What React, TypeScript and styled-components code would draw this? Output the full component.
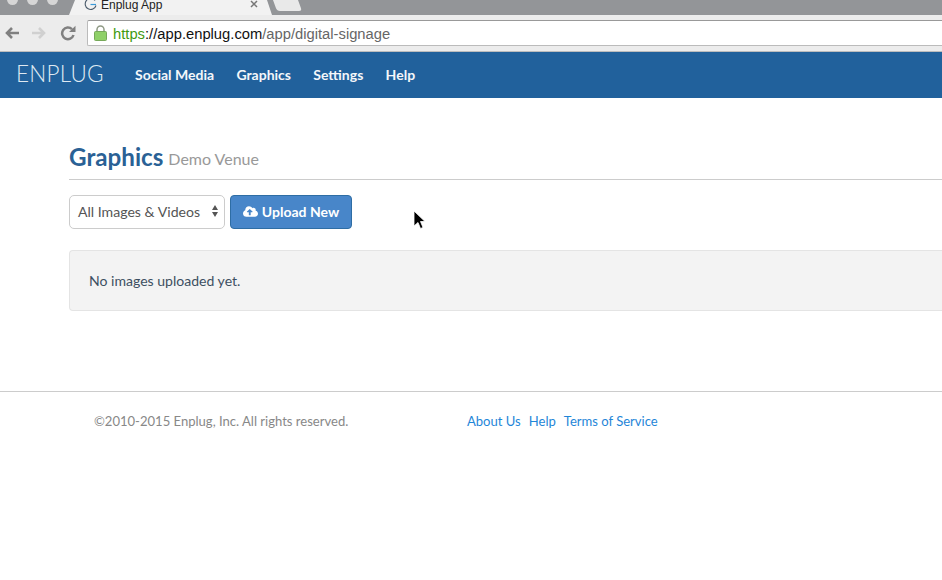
import React from 'react'
import styled, { createGlobalStyle } from 'styled-components'
import { FaCloudUploadAlt } from 'react-icons/fa'

const GlobalStyle = createGlobalStyle`
	html, body {
		margin: 0;
		padding: 0;
		background: #fff;
		overflow: hidden;
	}
	body {
		font-family: Lato, 'Liberation Sans', sans-serif;
	}
`

const Page = styled.div`
	width: 942px;
	height: 580px;
	overflow: hidden;
`

const TabStrip = styled.div`
	height: 15px;
	background: #939598;
	display: flex;
	overflow: hidden;
`

const WindowDots = styled.div`
	display: flex;
	gap: 9px;
	width: 69px;
	padding-left: 7px;
	box-sizing: border-box;
	margin-top: -6px;
`

const WindowDot = styled.span`
	width: 11px;
	height: 11px;
	border-radius: 50%;
	background: #d6d6d6;
`

const ActiveTab = styled.div`
	width: 203px;
	height: 15px;
	background: #f2f2f2;
	clip-path: polygon(6px 0, 198px 0, 203px 100%, 0 100%);
	display: flex;
	align-items: flex-start;
	padding: 0 14px 0 15px;
	box-sizing: border-box;
	font-family: 'Liberation Sans', sans-serif;
	font-size: 12px;
	line-height: 11px;
	color: #222;
	gap: 4px;
`

const Favicon = styled.svg`
	width: 13px;
	height: 13px;
	margin-top: -2px;
	flex: none;
`

const TabTitle = styled.span`
	flex: 1;
`

const TabClose = styled.svg`
	width: 8px;
	height: 8px;
	flex: none;
`

const NewTab = styled.div`
	width: 25px;
	height: 11px;
	margin-left: 3px;
	background: #e9e9e9;
	border-radius: 0 0 3px 3px;
	transform: skewX(20deg);
`

const AddressBar = styled.div`
	height: 36px;
	background: #ececec;
	border-bottom: 1px solid #bdbdbd;
	display: flex;
	align-items: center;
	padding-left: 4px;
	gap: 11px;
`

const NavIcon = styled.svg<{ $shift?: number }>`
	width: 16px;
	height: 16px;
	flex: none;
	margin-left: ${(props) => props.$shift || 0}px;
`

const UrlField = styled.div`
	flex: 1;
	height: 26px;
	box-sizing: border-box;
	background: #fff;
	border: 1px solid #bbb;
	border-top-color: #999;
	border-right: none;
	border-radius: 2px 0 0 2px;
	display: flex;
	align-items: center;
	padding-left: 6px;
	gap: 6px;
	font-family: 'Liberation Sans', sans-serif;
	font-size: 14.75px;
`

const UrlText = styled.span`
	padding-top: 1px;
`

const UrlGreen = styled.span`
	color: #3f9a10;
`
const UrlDark = styled.span`
	color: #111;
`
const UrlGray = styled.span`
	color: #666;
`

const TopNav = styled.nav`
	height: 46px;
	background: #21619c;
	display: flex;
	align-items: center;
	padding-left: 16px;
`

const Brand = styled.div`
	width: 119px;
	padding-bottom: 4px;
	font-size: 22.5px;
	font-weight: 300;
	color: #dfe9f2;
	letter-spacing: 0.2px;
`

const NavLinks = styled.div`
	display: flex;
	gap: 22.3px;
	padding-bottom: 2px;
`

const NavLink = styled.a`
	color: #f4f7fa;
	font-size: 14px;
	font-weight: 700;
`

const Content = styled.main`
	padding: 44px 0 0 69px;
`

const Header = styled.div`
	display: flex;
	align-items: flex-end;
	gap: 5px;
	padding-bottom: 8px;
	border-bottom: 1px solid #ccc;
`

const Title = styled.h1`
	margin: 0;
	font-size: 24.2px;
	line-height: 29px;
	font-weight: 700;
	color: #2a6195;
`

const Subtitle = styled.span`
	font-size: 16px;
	line-height: 20px;
	padding-bottom: 2px;
	color: #999;
`

const Toolbar = styled.div`
	display: flex;
	gap: 5px;
	margin-top: 15px;
	position: relative;
`

const SelectBox = styled.div`
	width: 156px;
	height: 34px;
	box-sizing: border-box;
	border: 1px solid #ccc;
	border-radius: 5px;
	background: #fff;
	display: flex;
	align-items: center;
	justify-content: space-between;
	padding: 0 6px 2px 8px;
	font-size: 14.1px;
	color: #555;
`

const UploadButton = styled.button`
	width: 122px;
	height: 34px;
	box-sizing: border-box;
	border: 1px solid #2e6da4;
	border-radius: 4px;
	background: #4886c9;
	color: #fff;
	font-family: inherit;
	font-size: 14px;
	font-weight: 700;
	display: flex;
	align-items: center;
	justify-content: center;
	gap: 4px;
	padding: 0 0 2px;
`

const Cursor = styled.svg`
	position: absolute;
	left: 344px;
	top: 15px;
	width: 13px;
	height: 20px;
`

const EmptyWell = styled.div`
	margin-top: 21px;
	height: 61px;
	box-sizing: border-box;
	background: #f3f3f3;
	border: 1px solid #e4e4e4;
	border-right: none;
	border-radius: 4px 0 0 4px;
	display: flex;
	align-items: center;
	padding-left: 19px;
	font-size: 14.05px;
	color: #3d4f61;
`

const Footer = styled.footer`
	margin-top: 80px;
	border-top: 1px solid #ccc;
	padding: 21px 0 0 94px;
	display: flex;
	font-size: 13.05px;
	line-height: 17px;
`

const Copyright = styled.span`
	width: 373px;
	color: #888;
`

const FooterLinks = styled.div`
	display: flex;
	gap: 8px;
`

const FooterLink = styled.a`
	color: #1f86d8;
`

const App = () => (
	<Page>
		<GlobalStyle />
		<TabStrip>
			<WindowDots>
				<WindowDot />
				<WindowDot />
				<WindowDot />
			</WindowDots>
			<ActiveTab>
				<Favicon viewBox="0 0 13 13">
					<path d="M11 2.5A5.5 5.5 0 1 0 12 7.5" fill="none" stroke="#4a5a6a" strokeWidth="1.1" />
					<path d="M6.5 6.5H12" fill="none" stroke="#3a9ad9" strokeWidth="1.2" />
				</Favicon>
				<TabTitle>Enplug App</TabTitle>
				<TabClose viewBox="0 0 8 8">
					<path d="M1 1l6 6M7 1 1 7" fill="none" stroke="#777" strokeWidth="1.5" />
				</TabClose>
			</ActiveTab>
			<NewTab />
		</TabStrip>
		<AddressBar>
			<NavIcon viewBox="0 0 16 16">
				<path d="M15 8H3M8 3 3 8l5 5" fill="none" stroke="#808080" strokeWidth="2.6" />
			</NavIcon>
			<NavIcon viewBox="0 0 16 16">
				<path d="M1 8h12M8 3l5 5-5 5" fill="none" stroke="#d0d0d0" strokeWidth="2.6" />
			</NavIcon>
			<NavIcon viewBox="0 0 16 16" $shift={2}>
				<path d="M13.5 10A5.8 5.8 0 1 1 12 4.2" fill="none" stroke="#808080" strokeWidth="2.5" />
				<path d="M9 7h6.5V.8z" fill="#808080" />
			</NavIcon>
			<UrlField>
				<svg width="13" height="16" viewBox="0 0 13 16">
					<path d="M3 7V4.5a3.5 3.5 0 0 1 7 0V7" fill="none" stroke="#8f9a85" strokeWidth="1.5" />
					<rect x="0.5" y="6.5" width="12" height="9" rx="1" fill="#8fd068" stroke="#76a859" />
				</svg>
				<UrlText>
					<UrlGreen>https</UrlGreen>
					<UrlDark>://app.enplug.com</UrlDark>
					<UrlGray>/app/digital-signage</UrlGray>
				</UrlText>
			</UrlField>
		</AddressBar>
		<TopNav>
			<Brand>ENPLUG</Brand>
			<NavLinks>
				<NavLink>Social Media</NavLink>
				<NavLink>Graphics</NavLink>
				<NavLink>Settings</NavLink>
				<NavLink>Help</NavLink>
			</NavLinks>
		</TopNav>
		<Content>
			<Header>
				<Title>Graphics</Title>
				<Subtitle>Demo Venue</Subtitle>
			</Header>
			<Toolbar>
				<SelectBox>
					All Images &amp; Videos
					<svg width="6" height="12" viewBox="0 0 6 12">
						<path d="M3 0 6 5H0zM3 12 0 7h6z" fill="#555" />
					</svg>
				</SelectBox>
				<UploadButton>
					<FaCloudUploadAlt size={15} />
					Upload New
				</UploadButton>
				<Cursor viewBox="0 0 13 20">
					<path d="M1 1v15l4-3.5 2.5 6 2.5-1-2.5-6H12z" fill="#000" stroke="#fff" strokeWidth="0.8" />
				</Cursor>
			</Toolbar>
			<EmptyWell>No images uploaded yet.</EmptyWell>
		</Content>
		<Footer>
			<Copyright>©2010-2015 Enplug, Inc. All rights reserved.</Copyright>
			<FooterLinks>
				<FooterLink>About Us</FooterLink>
				<FooterLink>Help</FooterLink>
				<FooterLink>Terms of Service</FooterLink>
			</FooterLinks>
		</Footer>
	</Page>
)

export default App
